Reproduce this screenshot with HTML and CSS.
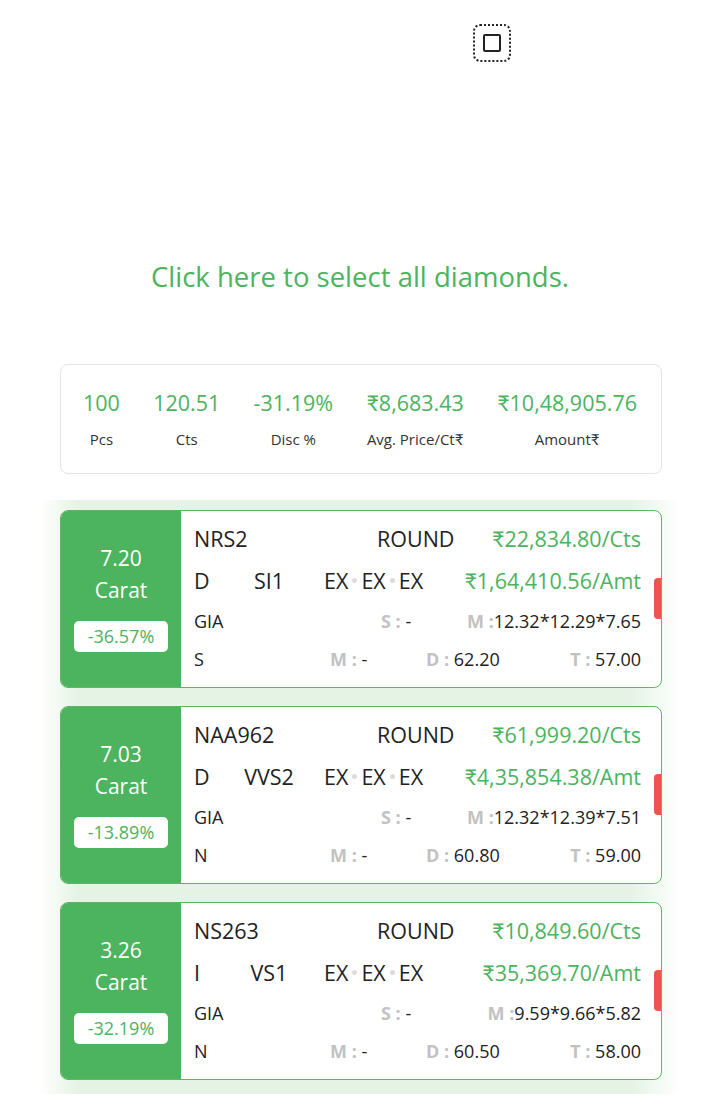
FILE: index.html
```html
<!DOCTYPE html>
<html lang="en">
<head>
    <meta charset="UTF-8">
    <meta name="viewport" content="width=device-width, initial-scale=1.0">
    <title>Select Diamonds</title>
    <link rel="stylesheet" href="styles.css">
</head>
<body>
    <div class="select-box">
        <div class="select-inner"></div>
    </div>

    <p class="select-all">Click here to select all diamonds.</p>

    <div class="summary">
        <div class="sum-item"><div class="sum-value">100</div><div class="sum-label">Pcs</div></div>
        <div class="sum-item"><div class="sum-value">120.51</div><div class="sum-label">Cts</div></div>
        <div class="sum-item"><div class="sum-value">-31.19%</div><div class="sum-label">Disc %</div></div>
        <div class="sum-item"><div class="sum-value">₹8,683.43</div><div class="sum-label">Avg. Price/Ct₹</div></div>
        <div class="sum-item"><div class="sum-value">₹10,48,905.76</div><div class="sum-label">Amount₹</div></div>
    </div>

    <div class="stone-list">
        <div class="stone-card">
            <div class="stone-side">
                <div class="carat">7.20</div>
                <div class="carat">Carat</div>
                <div class="disc-badge">-36.57%</div>
            </div>
            <div class="stone-info">
                <div class="row row-1"><span>NRS2</span><span>ROUND</span><span class="price">₹22,834.80/Cts</span></div>
                <div class="row row-2"><span>D</span><span class="clarity">SI1</span><span class="cut">EX<i class="dot"></i>EX<i class="dot"></i>EX</span><span class="price">₹1,64,410.56/Amt</span></div>
                <div class="row row-3"><span>GIA</span><span><b>S :</b> -</span><span class="end"><b>M :</b>12.32*12.29*7.65</span></div>
                <div class="row row-4"><span>S</span><span><b>M :</b> -</span><span><b>D :</b> 62.20</span><span class="end"><b>T :</b> 57.00</span></div>
            </div>
            <div class="flag"></div>
        </div>

        <div class="stone-card">
            <div class="stone-side">
                <div class="carat">7.03</div>
                <div class="carat">Carat</div>
                <div class="disc-badge">-13.89%</div>
            </div>
            <div class="stone-info">
                <div class="row row-1"><span>NAA962</span><span>ROUND</span><span class="price">₹61,999.20/Cts</span></div>
                <div class="row row-2"><span>D</span><span class="clarity">VVS2</span><span class="cut">EX<i class="dot"></i>EX<i class="dot"></i>EX</span><span class="price">₹4,35,854.38/Amt</span></div>
                <div class="row row-3"><span>GIA</span><span><b>S :</b> -</span><span class="end"><b>M :</b>12.32*12.39*7.51</span></div>
                <div class="row row-4"><span>N</span><span><b>M :</b> -</span><span><b>D :</b> 60.80</span><span class="end"><b>T :</b> 59.00</span></div>
            </div>
            <div class="flag"></div>
        </div>

        <div class="stone-card">
            <div class="stone-side">
                <div class="carat">3.26</div>
                <div class="carat">Carat</div>
                <div class="disc-badge">-32.19%</div>
            </div>
            <div class="stone-info">
                <div class="row row-1"><span>NS263</span><span>ROUND</span><span class="price">₹10,849.60/Cts</span></div>
                <div class="row row-2"><span>I</span><span class="clarity">VS1</span><span class="cut">EX<i class="dot"></i>EX<i class="dot"></i>EX</span><span class="price">₹35,369.70/Amt</span></div>
                <div class="row row-3"><span>GIA</span><span><b>S :</b> -</span><span class="end"><b>M :</b>9.59*9.66*5.82</span></div>
                <div class="row row-4"><span>N</span><span><b>M :</b> -</span><span><b>D :</b> 60.50</span><span class="end"><b>T :</b> 58.00</span></div>
            </div>
            <div class="flag"></div>
        </div>
    </div>
</body>
</html>
```

FILE: styles.css
```css
* {
    margin: 0;
    padding: 0;
    box-sizing: border-box;
}

body {
    font-family: 'Open Sans', 'Lato', sans-serif;
    background: #ffffff;
    color: #222222;
    width: 720px;
    padding-top: 24px;
}

.select-box {
    width: 38px;
    height: 38px;
    margin-left: 473px;
    border: 2px dotted #222;
    border-radius: 7px;
    display: flex;
    align-items: center;
    justify-content: center;
}

.select-inner {
    width: 18px;
    height: 18px;
    border: 2.5px solid #222;
    border-radius: 2px;
}

.select-all {
    margin-top: 198px;
    text-align: center;
    font-size: 27.5px;
    line-height: 34px;
    color: #4cb35e;
}

.summary {
    margin: 70px 0 0 60px;
    width: 602px;
    height: 110px;
    border: 1.5px solid #e4e4e4;
    border-radius: 8px;
    display: flex;
    justify-content: space-between;
    padding: 22px 24px 0 22px;
}

.sum-item {
    text-align: center;
}

.sum-value {
    font-size: 21.5px;
    line-height: 32px;
    color: #4cb35e;
}

.sum-label {
    margin-top: 10px;
    font-size: 15px;
    line-height: 20px;
    color: #333;
}

.stone-list {
    margin: 26px 0 0 40px;
    width: 640px;
    padding: 10px 18px 14px 20px;
    display: flex;
    flex-direction: column;
    gap: 18px;
    background: linear-gradient(90deg, rgba(225, 242, 225, 0) 0%, #e4f3e4 6%, #e4f3e4 92%, rgba(225, 242, 225, 0) 100%);
}

.stone-card {
    position: relative;
    display: flex;
    height: 178px;
    background: #fff;
    border: 1.5px solid #5cb85f;
    border-radius: 8px;
    overflow: hidden;
}

.stone-side {
    width: 120px;
    background: #4cb35e;
    color: #fff;
    display: flex;
    flex-direction: column;
    align-items: center;
    justify-content: center;
    padding-bottom: 4px;
}

.carat {
    font-size: 21px;
    line-height: 32px;
}

.disc-badge {
    margin-top: 15px;
    width: 94px;
    height: 31px;
    background: #fff;
    border-radius: 5px;
    color: #4cb35e;
    font-size: 18px;
    line-height: 31px;
    text-align: center;
}

.stone-info {
    flex: 1;
    padding: 7px 20px 0 13px;
}

.row {
    display: grid;
    align-items: center;
    font-size: 21.5px;
}

.row-1 {
    height: 40px;
    grid-template-columns: 183px 1fr auto;
}

.row-2 {
    height: 44px;
    grid-template-columns: 38px 74px 1fr auto;
}

.row-3 {
    height: 38px;
    font-size: 18px;
    grid-template-columns: 187px 1fr auto;
}

.row-4 {
    height: 38px;
    font-size: 18px;
    grid-template-columns: 136px 96px 1fr auto;
}

.price {
    color: #4cb35e;
    justify-self: end;
}

.end {
    justify-self: end;
}

.clarity {
    text-align: center;
}

.cut {
    padding-left: 18px;
    display: flex;
    align-items: center;
}

.dot {
    display: inline-block;
    width: 5px;
    height: 5px;
    margin: 0 4px;
    border-radius: 50%;
    background: #dcdcdc;
}

.row b {
    color: #c2c2c2;
    font-weight: 700;
}

.flag {
    position: absolute;
    right: 0;
    top: 67px;
    width: 7px;
    height: 41px;
    background: #f05252;
    border-radius: 4px 0 0 4px;
}
```
